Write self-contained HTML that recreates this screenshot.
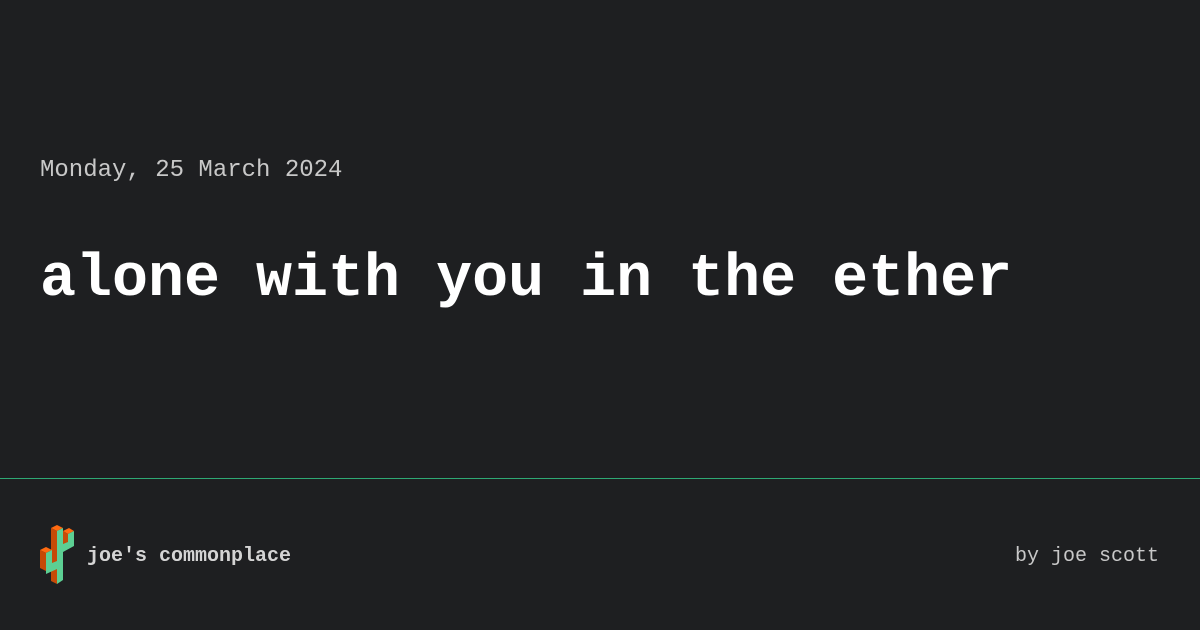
<!DOCTYPE html>
<html><head><style>
body{margin:0;width:1200px;height:630px;background:#1e1f21;position:relative;overflow:hidden;font-family:"Liberation Mono",monospace}
.d{position:absolute;left:40px;top:157px;font-size:24px;color:#c8c8c8}
.t{position:absolute;left:40px;top:246px;font-size:60px;font-weight:bold;color:#fff}
.l{position:absolute;left:0;top:478px;width:1200px;height:1px;background:#2ea874}
.n{position:absolute;left:87px;top:545px;font-size:20px;font-weight:bold;color:#d4d4d4}
.b{position:absolute;left:1015px;top:545px;font-size:20px;color:#c8c8c8}
svg{position:absolute;left:30px;top:515px}
</style></head><body>
<div class="d">Monday, 25 March 2024</div>
<div class="t">alone with you in the ether</div>
<div class="l"></div>
<svg width="60" height="80" viewBox="0 0 60 80">
<polygon points="21,13 27,10 33,13 27,16" fill="#ff6a10"/>
<polygon points="21,13 27,16 27,69 21,66" fill="#c64a06"/>
<polygon points="27,16 33,13 33,65 27,69" fill="#5ccf93"/>
<polygon points="10,35 16,32 22,35 16,38" fill="#ff6a10"/>
<polygon points="10,35 16,38 16,56 10,53" fill="#c64a06"/>
<polygon points="16,38 22,35 22,48 27,46 27,54 16,59" fill="#5ccf93"/>
<polygon points="33,16 39,13 44,16 38,19" fill="#ff6a10"/>
<polygon points="33,16 38,19 38,28 33,31" fill="#c64a06"/>
<polygon points="38,19 44,16 44,31 33,37 33,29 38,27" fill="#5ccf93"/>
</svg>
<div class="n">joe's commonplace</div>
<div class="b">by joe scott</div>
</body></html>
